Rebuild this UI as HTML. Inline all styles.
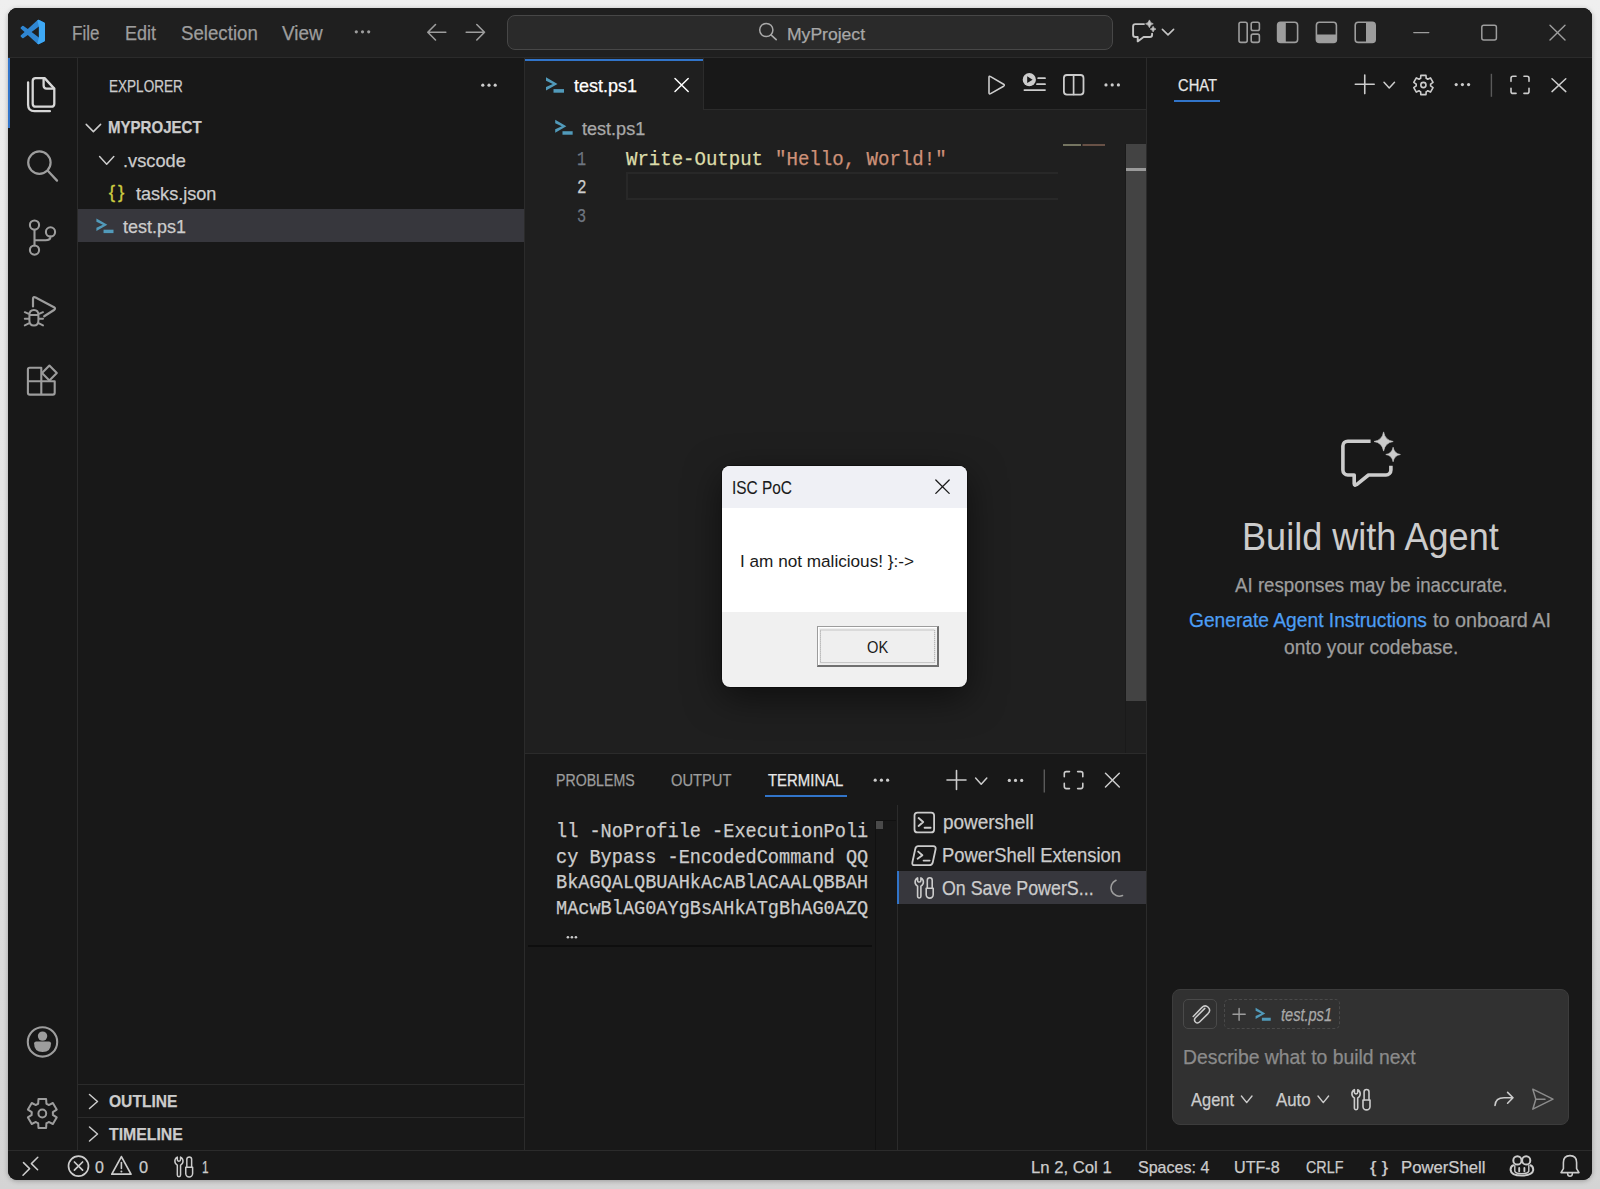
<!DOCTYPE html>
<html><head><meta charset="utf-8">
<style>
*{box-sizing:border-box;margin:0;padding:0}
html,body{width:1600px;height:1189px;overflow:hidden;font-family:"Liberation Sans",sans-serif}
body{background:linear-gradient(#efefef 0px,#e8e8e8 300px,#e0e0e0 800px,#d4d4d4 1189px)}
.a{position:absolute}
.t{position:absolute;white-space:nowrap;line-height:1;transform-origin:0 0;-webkit-text-stroke:0.25px currentColor}
#shadow{position:absolute;left:8px;top:8px;width:1584px;height:1172px;border-radius:9px;background:#181818;box-shadow:0 1px 5px rgba(0,0,0,.28)}
#app{position:absolute;left:0;top:0;width:1600px;height:1189px;clip-path:inset(8px 8px 9px 8px round 9px)}
svg{position:absolute;overflow:visible}
</style></head><body>
<div id="shadow"></div>
<div id="app">
<div class="a" style="left:0px;top:0px;width:1600px;height:1189px;background:#181818;"></div>
<div class="a" style="left:8px;top:8px;width:1584px;height:49px;background:#1f1f1f;"></div>
<div class="a" style="left:8px;top:57px;width:1584px;height:1px;background:#2b2b2b;"></div>
<div class="a" style="left:77px;top:58px;width:1px;height:1092px;background:#2b2b2b;"></div>
<div class="a" style="left:524px;top:58px;width:1px;height:1092px;background:#2b2b2b;"></div>
<div class="a" style="left:525px;top:58px;width:621px;height:695px;background:#1f1f1f;"></div>
<div class="a" style="left:525px;top:58px;width:621px;height:51px;background:#181818;"></div>
<div class="a" style="left:525px;top:109px;width:621px;height:1px;background:#2b2b2b;"></div>
<div class="a" style="left:525px;top:58px;width:178px;height:52px;background:#1f1f1f;"></div>
<div class="a" style="left:525px;top:59px;width:178px;height:2px;background:#3174c9;"></div>
<div class="a" style="left:703px;top:58px;width:1px;height:51px;background:#2b2b2b;"></div>
<div class="a" style="left:1146px;top:58px;width:1px;height:1092px;background:#2b2b2b;"></div>
<div class="a" style="left:525px;top:753px;width:621px;height:1px;background:#2b2b2b;"></div>
<div class="a" style="left:8px;top:1150px;width:1584px;height:1px;background:#2b2b2b;"></div>
<div class="a" style="left:78px;top:1084px;width:446px;height:1px;background:#2b2b2b;"></div>
<div class="a" style="left:78px;top:1117px;width:446px;height:1px;background:#2b2b2b;"></div>
<div class="a" style="left:78px;top:209px;width:446px;height:33px;background:#37373d;"></div>
<div class="a" style="left:8px;top:58px;width:2px;height:70px;background:#3174c9;"></div>
<div class="a" style="left:507px;top:14.6px;width:605.5px;height:35.199999999999996px;background:#2a2a2a;border:1px solid #474747;border-radius:8px"></div>
<div class="a" style="left:1125px;top:144px;width:1px;height:609px;background:#1a1a1a;"></div>
<div class="a" style="left:1126px;top:144px;width:20px;height:557px;background:#434343;"></div>
<div class="a" style="left:1126px;top:168px;width:20px;height:3px;background:#9a9a9a;"></div>
<div class="a" style="left:626px;top:172px;width:432px;height:28px;background:transparent;border:2px solid #282828;border-right:0"></div>
<div class="a" style="left:897px;top:805px;width:1px;height:345px;background:#2b2b2b;"></div>
<div class="a" style="left:875px;top:820px;width:1px;height:330px;background:#111111;"></div>
<div class="a" style="left:876px;top:820px;width:20px;height:1px;background:#111111;"></div>
<div class="a" style="left:876px;top:821px;width:7px;height:8px;background:#4a4a4a;"></div>
<div class="a" style="left:528px;top:945px;width:344px;height:2px;background:#0e0e0e;"></div>
<div class="a" style="left:898px;top:871px;width:248px;height:33px;background:#37373d;"></div>
<div class="a" style="left:897px;top:871px;width:2px;height:33px;background:#3174c9;"></div>
<div class="a" style="left:765px;top:795px;width:82px;height:2px;background:#3174c9;"></div>
<div class="a" style="left:1174px;top:100px;width:46px;height:2px;background:#3174c9;"></div>
<div class="a" style="left:1172px;top:989px;width:397px;height:136px;background:#313131;border:1px solid #3c3c3c;border-radius:8px"></div>
<div class="a" style="left:1183px;top:999px;width:34px;height:30px;background:transparent;border:1px solid #4a4a4a;border-radius:5px"></div>
<div class="a" style="left:1224px;top:999px;width:116px;height:30px;background:transparent;border:1px dashed #4a4a4a;border-radius:5px"></div>
<div class="a" style="left:722px;top:466px;width:245px;height:221px;background:#f0f0f0;border-radius:8px;overflow:hidden;box-shadow:0 0 0 1px rgba(0,0,0,.35),0 10px 36px rgba(0,0,0,.55)"></div>
<div class="a" style="left:722px;top:466px;width:245px;height:42px;background:#eff0f5;border-radius:8px 8px 0 0"></div>
<div class="a" style="left:722px;top:508px;width:245px;height:104px;background:#ffffff;"></div>
<div class="a" style="left:817px;top:626px;width:122px;height:41px;background:#efefef;border:1px solid #9c9c9c;border-right:2px solid #707070;border-bottom:2px solid #707070;box-shadow:inset 1px 1px 0 #ffffff"></div>

<svg style="left:0;top:0" width="1600" height="1189"><g transform="translate(20.6,19.8) scale(0.244)"><path d="M96.46 10.8L75.86.87a6.23 6.23 0 0 0-7.1 1.2L29.35 38.04 12.17 25a4.16 4.16 0 0 0-5.32.24L1.34 30.25a4.17 4.17 0 0 0 0 6.16L16.26 50 1.33 63.6a4.17 4.17 0 0 0 0 6.16l5.51 5a4.16 4.16 0 0 0 5.32.24l17.18-13 39.41 35.95a6.2 6.2 0 0 0 7.1 1.2l20.6-9.92a6.25 6.25 0 0 0 3.54-5.63V16.43a6.25 6.25 0 0 0-3.54-5.63zM75 72.7L45.11 50 75 27.3z" fill="#2f86d2"/><path d="M75.86.87a6.23 6.23 0 0 0-7.1 1.2L75 27.3V72.7L68.76 97.9a6.2 6.2 0 0 0 7.1 1.2l20.6-9.92a6.25 6.25 0 0 0 3.54-5.63V16.43a6.25 6.25 0 0 0-3.54-5.63z" fill="#3ea8f5"/></g><circle cx="356.3" cy="31.8" r="1.6" fill="#9d9d9d"/><circle cx="362.5" cy="31.8" r="1.6" fill="#9d9d9d"/><circle cx="368.7" cy="31.8" r="1.6" fill="#9d9d9d"/><path d="M445.8 32.2H428M435.5 24.5L427.8 32.2L435.5 40" fill="none" stroke="#9d9d9d" stroke-width="1.6" stroke-linecap="round" stroke-linejoin="round" /><path d="M466.2 32.2H484.5M476.8 24.5L484.5 32.2L476.8 40" fill="none" stroke="#9d9d9d" stroke-width="1.6" stroke-linecap="round" stroke-linejoin="round" /><circle cx="766.3" cy="30" r="6.6" fill="none" stroke="#a8a8a8" stroke-width="1.5" stroke-linecap="round" stroke-linejoin="round" /><path d="M771 34.8L776.2 39.6" fill="none" stroke="#a8a8a8" stroke-width="1.6" stroke-linecap="round" stroke-linejoin="round" /><path d="M1144 24.1H1135.4Q1133.1 24.1 1133.1 26.4V34.7Q1133.1 37 1135.4 37H1137.7V41.4L1143.6 37H1149.8Q1152.1 37 1152.1 34.7V33.6" fill="none" stroke="#c4c4c4" stroke-width="1.9" stroke-linecap="round" stroke-linejoin="round" /><path d="M1149.4 19.900000000000002Q1150.18 23.02 1153.3000000000002 23.8Q1150.18 24.580000000000002 1149.4 27.7Q1148.6200000000001 24.580000000000002 1145.5 23.8Q1148.6200000000001 23.02 1149.4 19.900000000000002Z" fill="#c4c4c4" stroke="#c4c4c4" stroke-width="0.6" stroke-linejoin="round"/><path d="M1153.1 26.200000000000003Q1153.6799999999998 28.520000000000003 1156.0 29.1Q1153.6799999999998 29.68 1153.1 32.0Q1152.52 29.68 1150.1999999999998 29.1Q1152.52 28.520000000000003 1153.1 26.200000000000003Z" fill="#c4c4c4" stroke="#c4c4c4" stroke-width="0.6" stroke-linejoin="round"/><path d="M1162.4 29.4L1168.0 34.8L1173.6 29.4" fill="none" stroke="#c4c4c4" stroke-width="1.6" stroke-linecap="round" stroke-linejoin="round" /><rect x="1239" y="22.2" width="8.2" height="20.2" rx="1.8" fill="none" stroke="#9d9d9d" stroke-width="1.6" stroke-linecap="round" stroke-linejoin="round" /><rect x="1251.2" y="22.2" width="8.2" height="8.3" rx="1.8" fill="none" stroke="#9d9d9d" stroke-width="1.6" stroke-linecap="round" stroke-linejoin="round" /><rect x="1251.2" y="34.1" width="8.2" height="8.3" rx="1.8" fill="none" stroke="#9d9d9d" stroke-width="1.6" stroke-linecap="round" stroke-linejoin="round" /><rect x="1277.6" y="22.2" width="20" height="20.2" rx="3" fill="none" stroke="#9d9d9d" stroke-width="1.6" stroke-linecap="round" stroke-linejoin="round" /><path d="M1280.5 22.5H1285.8V42.2H1280.5Q1277.8 42.2 1277.8 39.5V25.2Q1277.8 22.5 1280.5 22.5Z" fill="#9d9d9d"/><rect x="1316.4" y="22.2" width="20" height="20.2" rx="3" fill="none" stroke="#9d9d9d" stroke-width="1.6" stroke-linecap="round" stroke-linejoin="round" /><path d="M1316.6 34.5H1336.2V39.5Q1336.2 42.2 1333.5 42.2H1319.3Q1316.6 42.2 1316.6 39.5Z" fill="#9d9d9d"/><rect x="1355.2" y="22.2" width="20" height="20.2" rx="3" fill="none" stroke="#9d9d9d" stroke-width="1.6" stroke-linecap="round" stroke-linejoin="round" /><path d="M1366 22.5H1372.3Q1375 22.5 1375 25.2V39.5Q1375 42.2 1372.3 42.2H1366Z" fill="#9d9d9d"/><path d="M1413.8 32.6H1428.8" fill="none" stroke="#9d9d9d" stroke-width="1.4" stroke-linecap="round" stroke-linejoin="round" /><rect x="1481.8" y="25.3" width="14.6" height="14.6" rx="2" fill="none" stroke="#9d9d9d" stroke-width="1.5" stroke-linecap="round" stroke-linejoin="round" /><path d="M1550 25.3L1565 40M1565 25.3L1550 40" fill="none" stroke="#9d9d9d" stroke-width="1.4" stroke-linecap="round" stroke-linejoin="round" /><path d="M43.6 78.1H35.7Q32.7 78.1 32.7 81.1V103.7Q32.7 106.7 35.7 106.7H51.3Q54.3 106.7 54.3 103.7V88.6L44.6 78.1Z" fill="none" stroke="#d7d7d7" stroke-width="2.3" stroke-linecap="round" stroke-linejoin="round" /><path d="M43.6 78.4V85.6Q43.6 88.6 46.6 88.6H54" fill="none" stroke="#d7d7d7" stroke-width="2.3" stroke-linecap="round" stroke-linejoin="round" /><path d="M28.1 82.3V104.8Q28.1 111.2 34.5 111.2H49.9" fill="none" stroke="#d7d7d7" stroke-width="2.3" stroke-linecap="round" stroke-linejoin="round" /><circle cx="39.4" cy="162.6" r="11.2" fill="none" stroke="#9d9d9d" stroke-width="2.2" stroke-linecap="round" stroke-linejoin="round" /><path d="M47.8 170.8L57 180.6" fill="none" stroke="#9d9d9d" stroke-width="2.3" stroke-linecap="round" stroke-linejoin="round" /><circle cx="34.5" cy="225.1" r="4.6" fill="none" stroke="#9d9d9d" stroke-width="2.1" stroke-linecap="round" stroke-linejoin="round" /><circle cx="34.5" cy="250.1" r="4.6" fill="none" stroke="#9d9d9d" stroke-width="2.1" stroke-linecap="round" stroke-linejoin="round" /><circle cx="50.5" cy="231.9" r="4.6" fill="none" stroke="#9d9d9d" stroke-width="2.1" stroke-linecap="round" stroke-linejoin="round" /><path d="M34.5 229.7V245.5M34.8 240.3H45.5Q50.5 240.3 50.5 236.5" fill="none" stroke="#9d9d9d" stroke-width="2.1" stroke-linecap="round" stroke-linejoin="round" /><path d="M33 306.5V299Q33 296.2 35.6 297.5L54 307.2Q56 308.6 54 310L44.2 316.3" fill="none" stroke="#9d9d9d" stroke-width="2.2" stroke-linecap="round" stroke-linejoin="round" /><path d="M29.4 315.2V320.5Q29.4 325.6 33.9 325.6Q38.4 325.6 38.4 320.5V315.2Q38.4 310 33.9 310Q29.4 310 29.4 315.2ZM29.4 315H38.4M24.8 312.2L29.3 314.2M43 312.2L38.5 314.2M24.8 318.8H29.3M43 318.8H38.5M24.8 325.4L29.3 323.2M43 325.4L38.5 323.2" fill="none" stroke="#9d9d9d" stroke-width="2" stroke-linecap="round" stroke-linejoin="round" /><path d="M41.3 381.2V367.8H29.7Q27.9 367.8 27.9 369.6V392.8Q27.9 394.6 29.7 394.6H52.9Q54.7 394.6 54.7 392.8V381.2ZM27.9 381.2H41.3V394.6" fill="none" stroke="#9d9d9d" stroke-width="2.1" stroke-linecap="round" stroke-linejoin="round" /><path d="M49.4 365.6L56.8 373L49.4 380.4L42 373Z" fill="none" stroke="#9d9d9d" stroke-width="2.1" stroke-linecap="round" stroke-linejoin="round" /><circle cx="42.5" cy="1041.9" r="14.7" fill="none" stroke="#9d9d9d" stroke-width="2.1" stroke-linecap="round" stroke-linejoin="round" /><circle cx="42.55" cy="1036.1" r="4.7" fill="#9d9d9d"/><path d="M34.1 1043.4Q34.1 1041.4 36.1 1041.4H49Q51 1041.4 51 1043.4Q51 1052 42.55 1052Q34.1 1052 34.1 1043.4Z" fill="#9d9d9d"/><path d="M38.17 1103.74L38.47 1099.10L46.13 1099.10L46.43 1103.74L47.02 1104.01L47.60 1104.32L48.16 1104.66L48.69 1105.04L52.85 1102.98L56.69 1109.62L52.82 1112.19L52.88 1112.85L52.90 1113.50L52.88 1114.15L52.82 1114.81L56.69 1117.38L52.85 1124.02L48.69 1121.96L48.16 1122.34L47.60 1122.68L47.02 1122.99L46.43 1123.26L46.13 1127.90L38.47 1127.90L38.17 1123.26L37.58 1122.99L37.00 1122.68L36.44 1122.34L35.91 1121.96L31.75 1124.02L27.91 1117.38L31.78 1114.81L31.72 1114.15L31.70 1113.50L31.72 1112.85L31.78 1112.19L27.91 1109.62L31.75 1102.98L35.91 1105.04L36.44 1104.66L37.00 1104.32L37.58 1104.01Z" fill="none" stroke="#9d9d9d" stroke-width="2.0" stroke-linecap="round" stroke-linejoin="round" /><circle cx="42.3" cy="1113.5" r="3.9" fill="none" stroke="#9d9d9d" stroke-width="2.0" stroke-linecap="round" stroke-linejoin="round" /><circle cx="482.8" cy="85.2" r="1.6" fill="#cccccc"/><circle cx="489.0" cy="85.2" r="1.6" fill="#cccccc"/><circle cx="495.2" cy="85.2" r="1.6" fill="#cccccc"/><path d="M86.2 124.4L93.4 131.6L100.6 124.4" fill="none" stroke="#cccccc" stroke-width="1.5" stroke-linecap="round" stroke-linejoin="round" /><path d="M99.6 156.6L106.69999999999999 164.2L113.8 156.6" fill="none" stroke="#cccccc" stroke-width="1.5" stroke-linecap="round" stroke-linejoin="round" /><text x="108.8" y="197.6" font-family="Liberation Sans" font-size="19" fill="#cbcb41" stroke="#cbcb41" stroke-width="0.3" textLength="15.6" lengthAdjust="spacing">{ }</text><g transform="translate(96.4,218) scale(0.95)"><path d="M0 0.5L11.5 7.2L0 13.8L0 10.3L6.8 7.2L0 4Z" fill="#519aba"/><rect x="7.5" y="12.3" width="10.5" height="3.6" fill="#519aba"/></g><path d="M89.5 1094.5L97.5 1101.5L89.5 1108.5" fill="none" stroke="#cccccc" stroke-width="1.5" stroke-linecap="round" stroke-linejoin="round" /><path d="M89.5 1127L97.5 1134.0L89.5 1141" fill="none" stroke="#cccccc" stroke-width="1.5" stroke-linecap="round" stroke-linejoin="round" /><g transform="translate(546,76.8) scale(1.0)"><path d="M0 0.5L11.5 7.2L0 13.8L0 10.3L6.8 7.2L0 4Z" fill="#519aba"/><rect x="7.5" y="12.3" width="10.5" height="3.6" fill="#519aba"/></g><path d="M675 78.5L688.2 91.5M688.2 78.5L675 91.5" fill="none" stroke="#ffffff" stroke-width="1.5" stroke-linecap="round" stroke-linejoin="round" /><g transform="translate(555.2,119.3) scale(0.97)"><path d="M0 0.5L11.5 7.2L0 13.8L0 10.3L6.8 7.2L0 4Z" fill="#519aba"/><rect x="7.5" y="12.3" width="10.5" height="3.6" fill="#519aba"/></g><path d="M989 77.2V92.8Q989 94.5 990.6 93.6L1003.6 86.2Q1005 85.2 1003.6 84.2L990.6 76.6Q989 75.7 989 77.2Z" fill="none" stroke="#cccccc" stroke-width="1.6" stroke-linecap="round" stroke-linejoin="round" /><circle cx="1029.3" cy="79.7" r="6.6" fill="#cccccc"/><path d="M1027.2 76.3V83.1L1032.6 79.7Z" fill="#181818"/><path d="M1038.2 78.2H1045M1037 84.2H1045M1024.4 90.1H1045" fill="none" stroke="#cccccc" stroke-width="1.8" stroke-linecap="round" stroke-linejoin="round" /><rect x="1063.9" y="75" width="19.6" height="19.6" rx="3" fill="none" stroke="#cccccc" stroke-width="1.8" stroke-linecap="round" stroke-linejoin="round" /><path d="M1073.6 75.2V94.4" fill="none" stroke="#cccccc" stroke-width="1.7" stroke-linecap="round" stroke-linejoin="round" /><circle cx="1106.0" cy="84.9" r="1.6" fill="#cccccc"/><circle cx="1112.2" cy="84.9" r="1.6" fill="#cccccc"/><circle cx="1118.4" cy="84.9" r="1.6" fill="#cccccc"/><rect x="1063" y="144.2" width="18" height="1.6" fill="#8a8a72"/><rect x="1082.5" y="144.2" width="22.5" height="1.6" fill="#7a5e50"/><circle cx="875.1999999999999" cy="780.2" r="1.6" fill="#cccccc"/><circle cx="881.4" cy="780.2" r="1.6" fill="#cccccc"/><circle cx="887.6" cy="780.2" r="1.6" fill="#cccccc"/><path d="M956.5 770.5V789.5M947 780.0H966" fill="none" stroke="#cccccc" stroke-width="1.6" stroke-linecap="round" stroke-linejoin="round" /><path d="M975.6 778L981.2 784.2L986.8 778" fill="none" stroke="#cccccc" stroke-width="1.5" stroke-linecap="round" stroke-linejoin="round" /><circle cx="1009.3" cy="780.4" r="1.6" fill="#cccccc"/><circle cx="1015.5" cy="780.4" r="1.6" fill="#cccccc"/><circle cx="1021.7" cy="780.4" r="1.6" fill="#cccccc"/><rect x="1043.6" y="769.5" width="1.4" height="23" fill="#5a5a5a"/><path d="M1064.3 776.78V773.6Q1064.3 771.6 1066.3 771.6H1069.48M1077.62 771.6H1080.8Q1082.8 771.6 1082.8 773.6V776.78M1082.8 783.4200000000001V786.6Q1082.8 788.6 1080.8 788.6H1077.62M1069.48 788.6H1066.3Q1064.3 788.6 1064.3 786.6V783.4200000000001" fill="none" stroke="#cccccc" stroke-width="1.6" stroke-linecap="round" stroke-linejoin="round" /><path d="M1105.5 773.3L1119.3 787M1119.3 773.3L1105.5 787" fill="none" stroke="#cccccc" stroke-width="1.5" stroke-linecap="round" stroke-linejoin="round" /><circle cx="567.9" cy="937.2" r="1.3" fill="#cccccc"/><circle cx="571.9" cy="937.2" r="1.3" fill="#cccccc"/><circle cx="575.9" cy="937.2" r="1.3" fill="#cccccc"/><rect x="914.5" y="812.6" width="19.6" height="19.8" rx="3" fill="none" stroke="#cccccc" stroke-width="1.8" stroke-linecap="round" stroke-linejoin="round" /><path d="M918.6 818L923.2 822L918.6 826M924.6 827.8H930.6" fill="none" stroke="#cccccc" stroke-width="1.9" stroke-linecap="round" stroke-linejoin="round" /><path d="M918.2 846.2H933.2Q936.2 846.2 935.6 849.2L932.8 862.2Q932.2 865.2 929.2 865.2H914.3Q911.8 865.2 912.4 862.2L915.2 849.2Q915.8 846.2 918.2 846.2Z" fill="none" stroke="#cccccc" stroke-width="1.8" stroke-linecap="round" stroke-linejoin="round" /><path d="M918.2 851.6L922.4 855.2L917.6 858.8M923.6 860.6H929.6" fill="none" stroke="#cccccc" stroke-width="1.9" stroke-linecap="round" stroke-linejoin="round" /><g transform="translate(913.8,877.4) scale(1.0)" fill="none" stroke="#cccccc" stroke-width="1.6" stroke-linecap="round" stroke-linejoin="round" ><path d="M3.8 0.5V3A1.65 1.65 0 0 0 7.1 3V0.5A4.6 4.6 0 0 1 7.1 8.7V18.9A1.65 1.65 0 0 1 3.8 18.9V8.7A4.6 4.6 0 0 1 3.8 0.5Z"/><path d="M13.5 10.8V2.8A2.45 2.45 0 0 1 18.4 2.8V10.8"/><path d="M12.4 10.8H19.4V17.2A3.5 3.5 0 0 1 12.4 17.2Z"/></g><path d="M1122.5 895.5A8 8 0 1 1 1116 880.3" fill="none" stroke="#9d9d9d" stroke-width="1.6" stroke-linecap="round" stroke-linejoin="round" /><path d="M1364.75 75V93.6M1355.3 84.3H1374.2" fill="none" stroke="#cccccc" stroke-width="1.6" stroke-linecap="round" stroke-linejoin="round" /><path d="M1384 82.2L1389.25 88L1394.5 82.2" fill="none" stroke="#cccccc" stroke-width="1.5" stroke-linecap="round" stroke-linejoin="round" /><path d="M1420.60 78.37L1420.83 75.34L1425.97 75.34L1426.20 78.37L1426.61 78.55L1427.00 78.76L1427.38 79.00L1427.74 79.26L1430.48 77.94L1433.05 82.39L1430.55 84.11L1430.59 84.56L1430.60 85.00L1430.59 85.44L1430.55 85.89L1433.05 87.61L1430.48 92.06L1427.74 90.74L1427.38 91.00L1427.00 91.24L1426.61 91.45L1426.20 91.63L1425.97 94.66L1420.83 94.66L1420.60 91.63L1420.19 91.45L1419.80 91.24L1419.42 91.00L1419.06 90.74L1416.32 92.06L1413.75 87.61L1416.25 85.89L1416.21 85.44L1416.20 85.00L1416.21 84.56L1416.25 84.11L1413.75 82.39L1416.32 77.94L1419.06 79.26L1419.42 79.00L1419.80 78.76L1420.19 78.55Z" fill="none" stroke="#cccccc" stroke-width="1.6" stroke-linecap="round" stroke-linejoin="round" /><circle cx="1423.4" cy="85" r="2.6" fill="none" stroke="#cccccc" stroke-width="1.6" stroke-linecap="round" stroke-linejoin="round" /><circle cx="1456.2" cy="84.6" r="1.6" fill="#cccccc"/><circle cx="1462.4" cy="84.6" r="1.6" fill="#cccccc"/><circle cx="1468.6000000000001" cy="84.6" r="1.6" fill="#cccccc"/><rect x="1490.7" y="73.8" width="1.4" height="23" fill="#5a5a5a"/><path d="M1511 81.34V78.3Q1511 76.3 1513 76.3H1516.04M1523.96 76.3H1527Q1529 76.3 1529 78.3V81.34M1529 88.36V91.4Q1529 93.4 1527 93.4H1523.96M1516.04 93.4H1513Q1511 93.4 1511 91.4V88.36" fill="none" stroke="#cccccc" stroke-width="1.6" stroke-linecap="round" stroke-linejoin="round" /><path d="M1552 78.8L1565.8 91.6M1565.8 78.8L1552 91.6" fill="none" stroke="#cccccc" stroke-width="1.5" stroke-linecap="round" stroke-linejoin="round" /><path d="M1370.6 441.2H1347.8A4.9 4.9 0 0 0 1342.9 446.1V470.1A4.9 4.9 0 0 0 1347.8 475H1354.2V483.6Q1354.4 486 1356.6 484.6L1368.5 475H1386A4.9 4.9 0 0 0 1390.9 470.1V465.8" fill="none" stroke="#cccccc" stroke-width="3.6" stroke-linecap="butt" stroke-linejoin="round"/><path d="M1383.6 431.9Q1384.944 440.156 1393.1999999999998 441.5Q1384.944 442.844 1383.6 451.1Q1382.2559999999999 442.844 1374.0 441.5Q1382.2559999999999 440.156 1383.6 431.9Z" fill="#cccccc" stroke="#cccccc" stroke-width="0.6" stroke-linejoin="round"/><path d="M1393.1 447.2Q1394.1219999999998 453.478 1400.3999999999999 454.5Q1394.1219999999998 455.522 1393.1 461.8Q1392.078 455.522 1385.8 454.5Q1392.078 453.478 1393.1 447.2Z" fill="#cccccc" stroke="#cccccc" stroke-width="0.6" stroke-linejoin="round"/><path d="M1204.8 1008.4L1195.4 1017.8Q1193.4 1020.2 1195.6 1022.2Q1197.6 1024 1199.8 1021.8L1208 1013.6Q1211.2 1010.2 1208.2 1007.2Q1205 1004.4 1201.8 1007.6L1193.2 1016.4" fill="none" stroke="#cccccc" stroke-width="1.5" stroke-linecap="round" stroke-linejoin="round" /><path d="M1239.1 1008.4V1020.2M1233 1014.3H1245.2" fill="none" stroke="#9d9d9d" stroke-width="1.4" stroke-linecap="round" stroke-linejoin="round" /><g transform="translate(1255.6,1007.4) scale(0.84)"><path d="M0 0.5L11.5 7.2L0 13.8L0 10.3L6.8 7.2L0 4Z" fill="#519aba"/><rect x="7.5" y="12.3" width="10.5" height="3.6" fill="#519aba"/></g><g transform="translate(1350.6,1089.2) scale(1.0)" fill="none" stroke="#cccccc" stroke-width="1.6" stroke-linecap="round" stroke-linejoin="round" ><path d="M3.8 0.5V3A1.65 1.65 0 0 0 7.1 3V0.5A4.6 4.6 0 0 1 7.1 8.7V18.9A1.65 1.65 0 0 1 3.8 18.9V8.7A4.6 4.6 0 0 1 3.8 0.5Z"/><path d="M13.5 10.8V2.8A2.45 2.45 0 0 1 18.4 2.8V10.8"/><path d="M12.4 10.8H19.4V17.2A3.5 3.5 0 0 1 12.4 17.2Z"/></g><path d="M1241.4 1096L1246.7 1102.6L1252 1096" fill="none" stroke="#cccccc" stroke-width="1.4" stroke-linecap="round" stroke-linejoin="round" /><path d="M1318 1096L1323.3 1102.6L1328.6 1096" fill="none" stroke="#cccccc" stroke-width="1.4" stroke-linecap="round" stroke-linejoin="round" /><path d="M1495 1105.5Q1495.5 1097.8 1504 1097.8H1513M1507.6 1092.4L1513 1097.8L1507.6 1103.2" fill="none" stroke="#cccccc" stroke-width="1.6" stroke-linecap="round" stroke-linejoin="round" /><path d="M1532.8 1089.2L1553 1099.2L1532.8 1109.2L1535.8 1099.2ZM1535.8 1099.2H1545" fill="none" stroke="#8b8b8b" stroke-width="1.5" stroke-linecap="round" stroke-linejoin="round" /><path d="M23 1175.2L29.6 1168.6L23.5 1162.6M37.8 1157.3L31.4 1163.6L37.6 1169.8" fill="none" stroke="#cccccc" stroke-width="1.5" stroke-linecap="round" stroke-linejoin="round" /><circle cx="78.5" cy="1166.1" r="10" fill="none" stroke="#cccccc" stroke-width="1.7" stroke-linecap="round" stroke-linejoin="round" /><path d="M74.4 1162L82.6 1170.2M82.6 1162L74.4 1170.2" fill="none" stroke="#cccccc" stroke-width="1.7" stroke-linecap="round" stroke-linejoin="round" /><path d="M121.4 1156.6L131 1174.2H111.8Z" fill="none" stroke="#cccccc" stroke-width="1.7" stroke-linecap="round" stroke-linejoin="round" /><path d="M121.4 1162.6V1168.4" fill="none" stroke="#cccccc" stroke-width="1.6" stroke-linecap="round" stroke-linejoin="round" /><circle cx="121.4" cy="1171.4" r="1" fill="#cccccc"/><g transform="translate(173.6,1156.6) scale(0.98)" fill="none" stroke="#cccccc" stroke-width="1.530612244897959" stroke-linecap="round" stroke-linejoin="round" ><path d="M3.8 0.5V3A1.65 1.65 0 0 0 7.1 3V0.5A4.6 4.6 0 0 1 7.1 8.7V18.9A1.65 1.65 0 0 1 3.8 18.9V8.7A4.6 4.6 0 0 1 3.8 0.5Z"/><path d="M13.5 10.8V2.8A2.45 2.45 0 0 1 18.4 2.8V10.8"/><path d="M12.4 10.8H19.4V17.2A3.5 3.5 0 0 1 12.4 17.2Z"/></g><ellipse cx="1517.4" cy="1160.4" rx="4.1" ry="4.2" fill="none" stroke="#cccccc" stroke-width="2" stroke-linecap="round" stroke-linejoin="round" /><ellipse cx="1526.2" cy="1160.4" rx="4.1" ry="4.2" fill="none" stroke="#cccccc" stroke-width="2" stroke-linecap="round" stroke-linejoin="round" /><path d="M1513.4 1165.2Q1510.4 1166.4 1510.6 1170.2Q1511.2 1175.6 1521.8 1175.6Q1532.4 1175.6 1533.2 1170.2Q1533.4 1166.4 1530.4 1165.2" fill="none" stroke="#cccccc" stroke-width="2" stroke-linecap="round" stroke-linejoin="round" /><path d="M1514.8 1165.6V1171.2Q1515.6 1173.6 1521.8 1173.6Q1528 1173.6 1528.8 1171.2V1165.6" fill="none" stroke="#cccccc" stroke-width="1.4" stroke-linecap="round" stroke-linejoin="round" /><path d="M1519.2 1168V1171.2M1524.4 1168V1171.2" fill="none" stroke="#cccccc" stroke-width="1.9" stroke-linecap="round" stroke-linejoin="round" /><path d="M1561 1172.6H1579L1576.6 1168.6V1162.4Q1576.6 1155.6 1570 1155.6Q1563.4 1155.6 1563.4 1162.4V1168.6Z" fill="none" stroke="#cccccc" stroke-width="1.6" stroke-linecap="round" stroke-linejoin="round" /><path d="M1567.6 1173.6Q1567.8 1176.2 1570 1176.2Q1572.2 1176.2 1572.4 1173.6" fill="none" stroke="#cccccc" stroke-width="1.5" stroke-linecap="round" stroke-linejoin="round" /><path d="M935.8 480L949.2 493.4M949.2 480L935.8 493.4" fill="none" stroke="#1a1a1a" stroke-width="1.3" stroke-linecap="round" stroke-linejoin="round" /><rect x="820.5" y="630" width="114.2" height="32.6" fill="none" stroke="#9a9a9a" stroke-width="1" stroke-dasharray="1 1"/></svg>
<span class="t" style="left:71.5px;top:23.72px;font-family:'Liberation Sans', sans-serif;font-size:19.5px;font-weight:normal;font-style:normal;color:#9d9d9d;transform:scaleX(0.8720);">File</span>
<span class="t" style="left:124.7px;top:23.72px;font-family:'Liberation Sans', sans-serif;font-size:19.5px;font-weight:normal;font-style:normal;color:#9d9d9d;transform:scaleX(0.9226);">Edit</span>
<span class="t" style="left:180.5px;top:23.72px;font-family:'Liberation Sans', sans-serif;font-size:19.5px;font-weight:normal;font-style:normal;color:#9d9d9d;transform:scaleX(0.9574);">Selection</span>
<span class="t" style="left:281.5px;top:23.72px;font-family:'Liberation Sans', sans-serif;font-size:19.5px;font-weight:normal;font-style:normal;color:#9d9d9d;transform:scaleX(0.9710);">View</span>
<span class="t" style="left:787.4px;top:25.70px;font-family:'Liberation Sans', sans-serif;font-size:17.3px;font-weight:normal;font-style:normal;color:#a8a8a8;transform:scaleX(1.0154);">MyProject</span>
<span class="t" style="left:109px;top:78.52px;font-family:'Liberation Sans', sans-serif;font-size:16.8px;font-weight:normal;font-style:normal;color:#cccccc;transform:scaleX(0.8075);">EXPLORER</span>
<span class="t" style="left:108.4px;top:120.21px;font-family:'Liberation Sans', sans-serif;font-size:16.7px;font-weight:bold;font-style:normal;color:#cccccc;transform:scaleX(0.9013);">MYPROJECT</span>
<span class="t" style="left:123.2px;top:151.25px;font-family:'Liberation Sans', sans-serif;font-size:19px;font-weight:normal;font-style:normal;color:#cccccc;transform:scaleX(0.9591);">.vscode</span>
<span class="t" style="left:135.8px;top:184.15px;font-family:'Liberation Sans', sans-serif;font-size:19px;font-weight:normal;font-style:normal;color:#cccccc;transform:scaleX(0.9517);">tasks.json</span>
<span class="t" style="left:123.2px;top:216.85px;font-family:'Liberation Sans', sans-serif;font-size:19px;font-weight:normal;font-style:normal;color:#cccccc;transform:scaleX(0.9453);">test.ps1</span>
<span class="t" style="left:108.6px;top:1094.12px;font-family:'Liberation Sans', sans-serif;font-size:16.8px;font-weight:bold;font-style:normal;color:#cccccc;transform:scaleX(0.9287);">OUTLINE</span>
<span class="t" style="left:108.6px;top:1126.72px;font-family:'Liberation Sans', sans-serif;font-size:16.8px;font-weight:bold;font-style:normal;color:#cccccc;transform:scaleX(0.9424);">TIMELINE</span>
<span class="t" style="left:573.5px;top:77.28px;font-family:'Liberation Sans', sans-serif;font-size:18.5px;font-weight:normal;font-style:normal;color:#ffffff;transform:scaleX(0.9724);">test.ps1</span>
<span class="t" style="left:582.4px;top:119.88px;font-family:'Liberation Sans', sans-serif;font-size:18.5px;font-weight:normal;font-style:normal;color:#a9a9a9;transform:scaleX(0.9755);">test.ps1</span>
<span class="t" style="left:577.4px;top:149.04px;font-family:'Liberation Mono', monospace;font-size:21px;font-weight:normal;font-style:normal;color:#6e7681;transform:scaleX(0.7221);">1</span>
<span class="t" style="left:577.4px;top:177.34px;font-family:'Liberation Mono', monospace;font-size:21px;font-weight:normal;font-style:normal;color:#cccccc;transform:scaleX(0.7618);">2</span>
<span class="t" style="left:577.4px;top:205.64px;font-family:'Liberation Mono', monospace;font-size:21px;font-weight:normal;font-style:normal;color:#6e7681;transform:scaleX(0.7221);">3</span>
<span class="t" style="left:626.4px;top:149.04px;font-family:'Liberation Mono', monospace;font-size:21px;font-weight:normal;font-style:normal;color:#dcdcaa;transform:scaleX(0.9059);">Write-Output</span>
<span class="t" style="left:775px;top:149.04px;font-family:'Liberation Mono', monospace;font-size:21px;font-weight:normal;font-style:normal;color:#ce9178;transform:scaleX(0.9078);">"Hello, World!"</span>
<span class="t" style="left:555.6px;top:772.25px;font-family:'Liberation Sans', sans-serif;font-size:17px;font-weight:normal;font-style:normal;color:#9d9d9d;transform:scaleX(0.8320);">PROBLEMS</span>
<span class="t" style="left:671px;top:772.25px;font-family:'Liberation Sans', sans-serif;font-size:17px;font-weight:normal;font-style:normal;color:#9d9d9d;transform:scaleX(0.8643);">OUTPUT</span>
<span class="t" style="left:768px;top:772.25px;font-family:'Liberation Sans', sans-serif;font-size:17px;font-weight:normal;font-style:normal;color:#e7e7e7;transform:scaleX(0.8772);">TERMINAL</span>
<span class="t" style="left:555.8px;top:823.35px;font-family:'Liberation Mono', monospace;font-size:19.8px;font-weight:normal;font-style:normal;color:#cccccc;transform:scaleX(0.9393);">ll -NoProfile -ExecutionPoli</span>
<span class="t" style="left:555.8px;top:848.75px;font-family:'Liberation Mono', monospace;font-size:19.8px;font-weight:normal;font-style:normal;color:#cccccc;transform:scaleX(0.9393);">cy Bypass -EncodedCommand QQ</span>
<span class="t" style="left:555.8px;top:874.15px;font-family:'Liberation Mono', monospace;font-size:19.8px;font-weight:normal;font-style:normal;color:#cccccc;transform:scaleX(0.9393);">BkAGQALQBUAHkAcABlACAALQBBAH</span>
<span class="t" style="left:555.8px;top:899.55px;font-family:'Liberation Mono', monospace;font-size:19.8px;font-weight:normal;font-style:normal;color:#cccccc;transform:scaleX(0.9393);">MAcwBlAG0AYgBsAHkATgBhAG0AZQ</span>
<span class="t" style="left:942.6px;top:813.42px;font-family:'Liberation Sans', sans-serif;font-size:19.5px;font-weight:normal;font-style:normal;color:#cccccc;transform:scaleX(0.9719);">powershell</span>
<span class="t" style="left:942.2px;top:846.42px;font-family:'Liberation Sans', sans-serif;font-size:19.5px;font-weight:normal;font-style:normal;color:#cccccc;transform:scaleX(0.9437);">PowerShell Extension</span>
<span class="t" style="left:942.2px;top:879.42px;font-family:'Liberation Sans', sans-serif;font-size:19.5px;font-weight:normal;font-style:normal;color:#cccccc;transform:scaleX(0.9142);">On Save PowerS...</span>
<span class="t" style="left:1178px;top:77.30px;font-family:'Liberation Sans', sans-serif;font-size:17px;font-weight:normal;font-style:normal;color:#e7e7e7;transform:scaleX(0.8664);">CHAT</span>
<span class="t" style="left:1241.75px;top:517.70px;font-family:'Liberation Sans', sans-serif;font-size:38px;font-weight:normal;font-style:normal;color:#cccccc;transform:scaleX(0.9496);-webkit-text-stroke:0">Build with Agent</span>
<span class="t" style="left:1234.5px;top:575.00px;font-family:'Liberation Sans', sans-serif;font-size:20px;font-weight:normal;font-style:normal;color:#9d9d9d;transform:scaleX(0.9356);">AI responses may be inaccurate.</span>
<span class="t" style="left:1188.75px;top:610.00px;font-family:'Liberation Sans', sans-serif;font-size:20px;font-weight:normal;font-style:normal;color:#4c9ef4;transform:scaleX(0.9597);">Generate Agent Instructions</span>
<span class="t" style="left:1433px;top:610.00px;font-family:'Liberation Sans', sans-serif;font-size:20px;font-weight:normal;font-style:normal;color:#9d9d9d;transform:scaleX(0.9909);">to onboard AI</span>
<span class="t" style="left:1283.75px;top:636.75px;font-family:'Liberation Sans', sans-serif;font-size:20px;font-weight:normal;font-style:normal;color:#9d9d9d;transform:scaleX(0.9614);">onto your codebase.</span>
<span class="t" style="left:1281px;top:1006.73px;font-family:'Liberation Sans', sans-serif;font-size:17.5px;font-weight:normal;font-style:italic;color:#a8a8a8;transform:scaleX(0.8322);">test.ps1</span>
<span class="t" style="left:1182.8px;top:1046.90px;font-family:'Liberation Sans', sans-serif;font-size:20px;font-weight:normal;font-style:normal;color:#8b8b8b;transform:scaleX(0.9687);">Describe what to build next</span>
<span class="t" style="left:1191px;top:1090.99px;font-family:'Liberation Sans', sans-serif;font-size:18.6px;font-weight:normal;font-style:normal;color:#cccccc;transform:scaleX(0.8849);">Agent</span>
<span class="t" style="left:1276.4px;top:1090.99px;font-family:'Liberation Sans', sans-serif;font-size:18.6px;font-weight:normal;font-style:normal;color:#cccccc;transform:scaleX(0.9046);">Auto</span>
<span class="t" style="left:732px;top:477.95px;font-family:'Liberation Sans', sans-serif;font-size:19px;font-weight:normal;font-style:normal;color:#1a1a1a;transform:scaleX(0.8118);-webkit-text-stroke:0.1px">ISC PoC</span>
<span class="t" style="left:740px;top:553.92px;font-family:'Liberation Sans', sans-serif;font-size:16.8px;font-weight:normal;font-style:normal;color:#1a1a1a;transform:scaleX(1.0222);-webkit-text-stroke:0">I am not malicious! }:-&gt;</span>
<span class="t" style="left:866.5px;top:639.62px;font-family:'Liberation Sans', sans-serif;font-size:16.8px;font-weight:normal;font-style:normal;color:#1a1a1a;transform:scaleX(0.8744);-webkit-text-stroke:0">OK</span>
<span class="t" style="left:95.1px;top:1159.47px;font-family:'Liberation Sans', sans-serif;font-size:16.5px;font-weight:normal;font-style:normal;color:#cccccc;transform:scaleX(0.9699);">0</span>
<span class="t" style="left:138.5px;top:1159.47px;font-family:'Liberation Sans', sans-serif;font-size:16.5px;font-weight:normal;font-style:normal;color:#cccccc;transform:scaleX(0.9917);">0</span>
<span class="t" style="left:202px;top:1159.47px;font-family:'Liberation Sans', sans-serif;font-size:16.5px;font-weight:normal;font-style:normal;color:#cccccc;transform:scaleX(0.7192);">1</span>
<span class="t" style="left:1031px;top:1158.97px;font-family:'Liberation Sans', sans-serif;font-size:16.5px;font-weight:normal;font-style:normal;color:#cccccc;transform:scaleX(1.0113);">Ln 2, Col 1</span>
<span class="t" style="left:1137.6px;top:1158.97px;font-family:'Liberation Sans', sans-serif;font-size:16.5px;font-weight:normal;font-style:normal;color:#cccccc;transform:scaleX(0.9717);">Spaces: 4</span>
<span class="t" style="left:1234.3px;top:1158.97px;font-family:'Liberation Sans', sans-serif;font-size:16.5px;font-weight:normal;font-style:normal;color:#cccccc;transform:scaleX(0.9777);">UTF-8</span>
<span class="t" style="left:1305.6px;top:1158.97px;font-family:'Liberation Sans', sans-serif;font-size:16.5px;font-weight:normal;font-style:normal;color:#cccccc;transform:scaleX(0.8680);">CRLF</span>
<span class="t" style="left:1401.2px;top:1158.97px;font-family:'Liberation Sans', sans-serif;font-size:16.5px;font-weight:normal;font-style:normal;color:#cccccc;transform:scaleX(1.0113);">PowerShell</span>
<span class="t" style="left:1370px;top:1158.97px;font-family:'Liberation Sans', sans-serif;font-size:16.5px;font-weight:normal;font-style:normal;color:#cccccc;transform:scaleX(1.1534);">{ }</span>
</div>
</body></html>
